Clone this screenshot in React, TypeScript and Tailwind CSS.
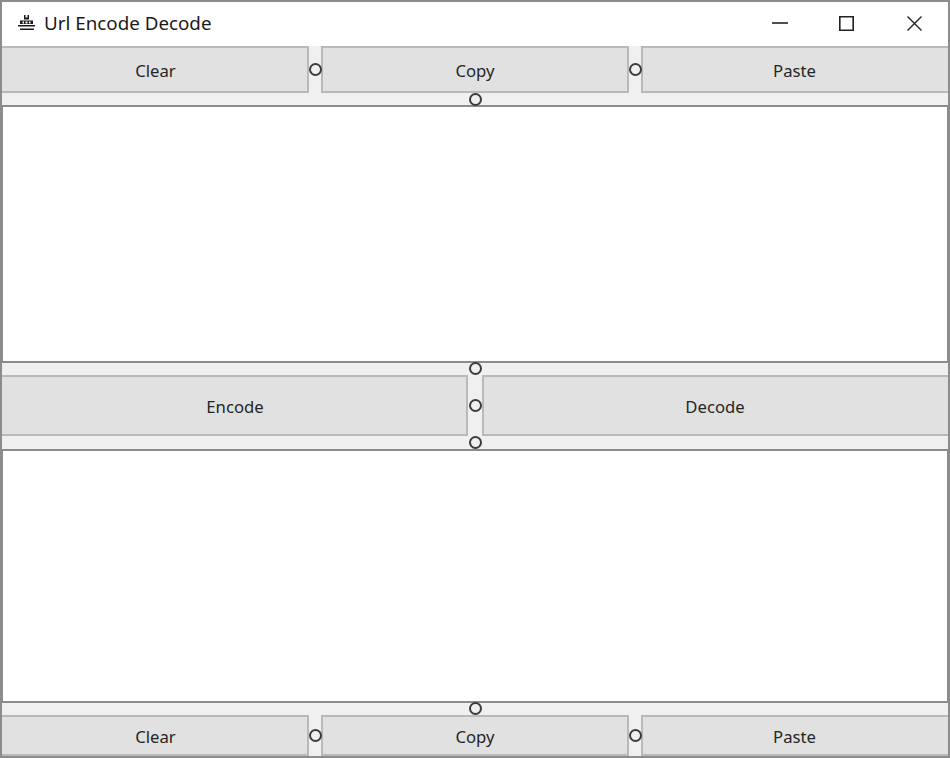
const font = { fontFamily: '"Noto Sans", "Open Sans", sans-serif' };

function Dot() {
    return (
        <span className="block size-[13px] shrink-0 rounded-full border-2 border-[#3c3c3c] bg-[#f0f0f0] blur-[0.3px]" />
    );
}

function ActionButton({ label, className }: { label: string; className: string }) {
    return (
        <button className={`flex items-center justify-center border-2 border-[#b9b9b9] bg-[#e1e1e1] pt-[2px] text-[16.7px] text-[#262626] ${className}`}>
            {label}
        </button>
    );
}

function Splitter({ className }: { className: string }) {
    return (
        <div className={`flex shrink-0 items-center justify-center bg-[#f0f0f0] ${className}`}>
            <Dot />
        </div>
    );
}

function ThreeButtons({ height }: { height: string }) {
    return (
        <div className={`flex shrink-0 ${height}`}>
            <ActionButton label="Clear" className="w-[307px] shrink-0 border-l-0 pl-[2px]" />
            <Splitter className="w-[12px]" />
            <ActionButton label="Copy" className="w-[308px] shrink-0" />
            <Splitter className="w-[12px]" />
            <ActionButton label="Paste" className="flex-1 border-r-0 pr-[2px]" />
        </div>
    );
}

function TextPane({ height }: { height: string }) {
    return <div className={`shrink-0 border-x border-y-2 border-[#8c8c8c] bg-white ${height}`} />;
}

export default function App() {
    return (
        <div className="h-[758px] w-[950px] overflow-hidden bg-white" style={font}>
            <div className="flex h-full flex-col border-2 border-[#8c8c8c]">
                <div className="flex h-[44px] shrink-0 items-center bg-white pb-[2px]">
                    <svg className="mr-[9px] ml-[15px] size-[18px]" viewBox="0 0 18 18" fill="#1a1a1a">
                        <path d="M7 1h1.5v2.5h2V1H12v4.5H7z" />
                        <path d="M3 6.5h13V10H3z" />
                        <path d="M5.5 7.5h1.5v2H5.5zM8.5 7.5h2v2h-2zM12 7.5h1.5v2H12z" fill="#fff" />
                        <path d="M1 11h17v1.5H1zM3 14.5h14V16H3z" />
                    </svg>
                    <span className="text-[18.8px] leading-none text-[#1a1a1a]">Url Encode Decode</span>
                    <div className="ml-auto flex items-center">
                        <svg className="mr-[51px] size-[16px]" viewBox="0 0 16 16" fill="none" stroke="#222" strokeWidth="1.6">
                            <path d="M0 8h16" />
                        </svg>
                        <svg className="mr-[53px] size-[15px]" viewBox="0 0 15 15" fill="none" stroke="#222" strokeWidth="1.6">
                            <path d="M0.8 0.8h13.4v13.4H0.8z" />
                        </svg>
                        <svg className="mr-[26px] size-[15px]" viewBox="0 0 15 15" fill="none" stroke="#222" strokeWidth="1.4">
                            <path d="M0.5 0.5l14 14M14.5 0.5l-14 14" />
                        </svg>
                    </div>
                </div>
                <ThreeButtons height="h-[47px]" />
                <Splitter className="h-[12px]" />
                <TextPane height="h-[258px]" />
                <Splitter className="h-[12px] pb-[1px]" />
                <div className="flex h-[61px] shrink-0">
                    <ActionButton label="Encode" className="w-[466px] shrink-0 border-l-0 pl-[2px]" />
                    <Splitter className="w-[14px]" />
                    <ActionButton label="Decode" className="flex-1 border-r-0 pr-[2px]" />
                </div>
                <Splitter className="h-[13px]" />
                <TextPane height="h-[254px]" />
                <Splitter className="h-[12px] pb-[1px]" />
                <ThreeButtons height="flex-1" />
            </div>
        </div>
    );
}
